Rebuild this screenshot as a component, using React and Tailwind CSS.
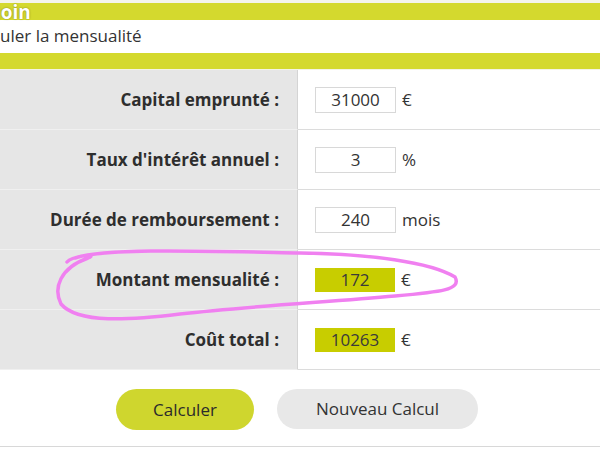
export default function App() {
  const rows = [
    { label: 'Capital emprunté :', value: '31000', unit: '€' },
    { label: "Taux d'intérêt annuel :", value: '3', unit: '%' },
    { label: 'Durée de remboursement :', value: '240', unit: 'mois' },
    { label: 'Montant mensualité :', value: '172', unit: '€', result: true },
    { label: 'Coût total :', value: '10263', unit: '€', result: true },
  ]

  return (
    <div className="relative w-[600px] h-[450px] overflow-hidden bg-white text-[#333] font-['Open_Sans',_'Liberation_Sans',_sans-serif]">
      {/* header bands */}
      <div className="h-[3px] bg-[#f4f4ec]" />
      <div className="h-[17px] bg-[#d4d92e]" />
      <div className="h-[33px] bg-white flex items-center text-[17px] leading-none pb-[2px]">uler la mensualité</div>
      <div className="h-[16px] bg-[#d4d92e]" />
      <div className="h-[1px] bg-[#f4f4e4]" />

      {/* form table */}
      <div className="grid grid-cols-[298px_1fr]">
        {rows.map((r) => (
          <div key={r.label} className="contents">
            <div className="h-[60px] flex items-center justify-end pr-[18px] bg-[#e6e6e6] border-r border-[#d4d4d4] border-b border-b-[#f0f0f0] text-[17px] font-bold text-[#2e2e2e]">
              {r.label}
            </div>
            <div className="h-[60px] flex items-center pl-[17px] border-b border-[#dcdcdc]">
              {r.result ? (
                <div className="w-[80px] h-[24px] bg-[#c8cd00] flex items-center justify-center text-[17px] text-[#3a3a3a]">{r.value}</div>
              ) : (
                <div className="w-[81px] h-[26px] border border-[#d8d8d8] flex items-center justify-center text-[17px] text-[#333]">{r.value}</div>
              )}
              <span className="ml-[6px] text-[17px] text-[#333]">{r.unit}</span>
            </div>
          </div>
        ))}
      </div>

      {/* buttons */}
      <div className="flex justify-center gap-[23px] pt-[19px] pb-[16px] border-b border-[#d8d8d8] pr-[6px]">
        <button className="w-[138px] h-[41px] rounded-full bg-[#cfd62e] text-[17px] text-[#2b2b2b]">Calculer</button>
        <button className="w-[201px] h-[40px] rounded-full bg-[#e8e8e8] text-[17px] text-[#333]">Nouveau Calcul</button>
      </div>

      {/* watermark */}
      <div className="absolute left-[-9px] top-[3px] text-[19px] font-bold leading-none text-white [text-shadow:0_0_2px_rgba(0,0,0,0.4)]">coin</div>

      {/* hand-drawn highlight */}
      <svg className="absolute left-0 top-0 pointer-events-none" width="600" height="450" viewBox="0 0 600 450">
        <path
          d="M 75 258 C 105 248, 200 251, 300 253 C 370 254, 430 262, 455 277 C 462 290, 440 292, 395 296 C 330 302, 250 306, 180 314 C 130 320, 78 324, 61 304 C 53 288, 60 268, 88 258 C 100 253, 72 256, 67 262"
          fill="none"
          stroke="#f080f0"
          strokeWidth="3.5"
          strokeLinecap="round"
          strokeLinejoin="round"
        />
      </svg>
    </div>
  )
}
